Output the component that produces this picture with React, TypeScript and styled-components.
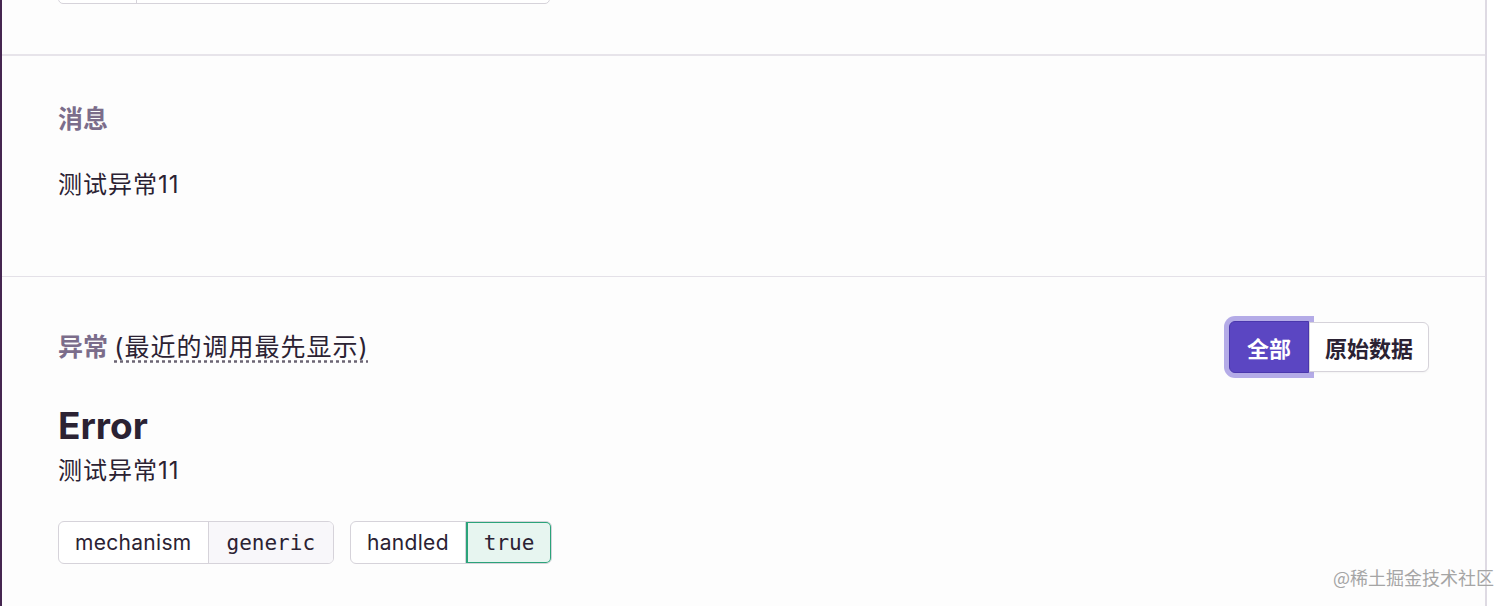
import React from "react";
import styled, { createGlobalStyle } from "styled-components";

const GlobalStyle = createGlobalStyle`
  body {
    margin: 0;
    background: #ffffff;
    font-family: Inter, "Noto Sans CJK SC", sans-serif;
    color: #2b2233;
  }
`;

const Page = styled.div`
  display: flex;
  height: 606px;
  overflow: hidden;
  position: relative;
`;

const SideBar = styled.div`
  width: 2px;
  flex: none;
  background: #452650;
`;

const Main = styled.div`
  width: 1483px;
  flex: none;
  border-right: 2px solid #dedae3;
  background: #fdfdfd;
`;

const Section = styled.section<{ $pt: number; $pb: number; $last?: boolean }>`
  padding: ${(p) => p.$pt}px 56px ${(p) => p.$pb}px 56px;
  border-bottom: ${(p) => (p.$last ? "none" : "1px solid #e4e1e8")};
  overflow: hidden;
`;

const TopSection = styled.section`
  height: 54px;
  padding: 0 56px;
  border-bottom: 2px solid #e7e4ea;
  overflow: hidden;
`;

const KeyValueBox = styled.div`
  display: flex;
  width: 490px;
  height: 44px;
  margin-top: -42px;
  border: 1px solid #d6d3da;
  border-radius: 5px;
  background: #ffffff;
`;

const KeyCell = styled.div<{ $w?: number }>`
  width: ${(p) => (p.$w ? `${p.$w}px` : "auto")};
  flex: ${(p) => (p.$w ? "none" : "1")};
  border-right: ${(p) => (p.$w ? "1px solid #d6d3da" : "none")};
`;

const SectionTitle = styled.h3`
  margin: 0;
  font-size: 25px;
  line-height: 30px;
  font-weight: 600;
  color: #7b6d8b;
`;

const Hint = styled.span`
  color: #2b2233;
  font-weight: 400;
  letter-spacing: 1px;
  text-decoration: underline dotted #6b6473;
  text-underline-offset: 4px;
`;

const BodyText = styled.p<{ $mt: number }>`
  margin: ${(p) => p.$mt}px 0 0;
  font-size: 24px;
  line-height: 30px;
  letter-spacing: 1px;
`;

const HeaderRow = styled.div`
  display: flex;
  align-items: center;
  justify-content: space-between;
  height: 52px;
`;

const ButtonGroup = styled.div`
  display: flex;
  align-items: center;
`;

const ToggleButton = styled.button<{ $active?: boolean }>`
  position: relative;
  z-index: ${(p) => (p.$active ? 0 : 1)};
  height: ${(p) => (p.$active ? 52 : 50)}px;
  padding: 0 ${(p) => (p.$active ? 17 : 15)}px;
  font-family: Inter, "Noto Sans CJK SC", sans-serif;
  font-size: 22px;
  font-weight: 600;
  color: ${(p) => (p.$active ? "#ffffff" : "#2b2233")};
  background: ${(p) => (p.$active ? "#5b46c2" : "#ffffff")};
  border: 1px solid ${(p) => (p.$active ? "#4a37ad" : "#d6d3da")};
  border-radius: ${(p) => (p.$active ? "6px 0 0 6px" : "0 6px 6px 0")};
  box-shadow: ${(p) =>
    p.$active ? "0 0 0 5px rgba(120, 104, 214, 0.55)" : "0 1px 2px rgba(0,0,0,0.04)"};
  cursor: pointer;
`;

const ErrorType = styled.h2`
  margin: 31px 0 0;
  font-size: 37px;
  line-height: 44px;
  font-weight: 700;
  color: #2b2233;
`;

const TagList = styled.div`
  display: flex;
  gap: 16px;
  margin-top: 35px;
`;

const Tag = styled.div`
  display: flex;
  box-sizing: border-box;
  height: 43px;
  border: 1px solid #d6d3da;
  border-radius: 6px;
  overflow: hidden;
  background: #ffffff;
`;

const TagKey = styled.span`
  display: flex;
  align-items: center;
  padding: 0 16px;
  font-size: 21px;
  letter-spacing: 0.3px;
  color: #2b2233;
  border-right: 1px solid #d6d3da;
`;

const TagValue = styled.span<{ $accent?: boolean }>`
  display: flex;
  align-items: center;
  padding: 0 18px;
  font-family: "DejaVu Sans Mono", "Liberation Mono", monospace;
  font-size: 21px;
  color: #2b2233;
  background: ${(p) => (p.$accent ? "#e7f5f0" : "#f8f7fa")};
  box-shadow: ${(p) => (p.$accent ? "inset 0 0 0 2px #2ba37a" : "none")};
  border-radius: ${(p) => (p.$accent ? "0 6px 6px 0" : "0")};
  margin: ${(p) => (p.$accent ? "-1px -1px -1px 0" : "0")};
`;

const Watermark = styled.div`
  position: absolute;
  right: 18px;
  bottom: 16px;
  font-size: 18px;
  color: #a5a5a5;
  font-family: "Noto Sans CJK SC", sans-serif;
`;

const tags = [
  { key: "mechanism", value: "generic" },
  { key: "handled", value: "true", accent: true },
];

export default function App() {
  return (
    <>
      <GlobalStyle />
      <Page>
        <SideBar />
        <Main>
          <TopSection>
            <KeyValueBox>
              <KeyCell $w={77} />
              <KeyCell />
            </KeyValueBox>
          </TopSection>

          <Section $pt={48} $pb={76}>
            <SectionTitle>消息</SectionTitle>
            <BodyText $mt={36}>测试异常11</BodyText>
          </Section>

          <Section $pt={44} $pb={60} $last>
            <HeaderRow>
              <SectionTitle>
                异常 <Hint>(最近的调用最先显示)</Hint>
              </SectionTitle>
              <ButtonGroup>
                <ToggleButton $active>全部</ToggleButton>
                <ToggleButton>原始数据</ToggleButton>
              </ButtonGroup>
            </HeaderRow>
            <ErrorType>Error</ErrorType>
            <BodyText $mt={8}>测试异常11</BodyText>
            <TagList>
              {tags.map((t) => (
                <Tag key={t.key}>
                  <TagKey>{t.key}</TagKey>
                  <TagValue $accent={t.accent}>{t.value}</TagValue>
                </Tag>
              ))}
            </TagList>
          </Section>
        </Main>
        <Watermark>@稀土掘金技术社区</Watermark>
      </Page>
    </>
  );
}
